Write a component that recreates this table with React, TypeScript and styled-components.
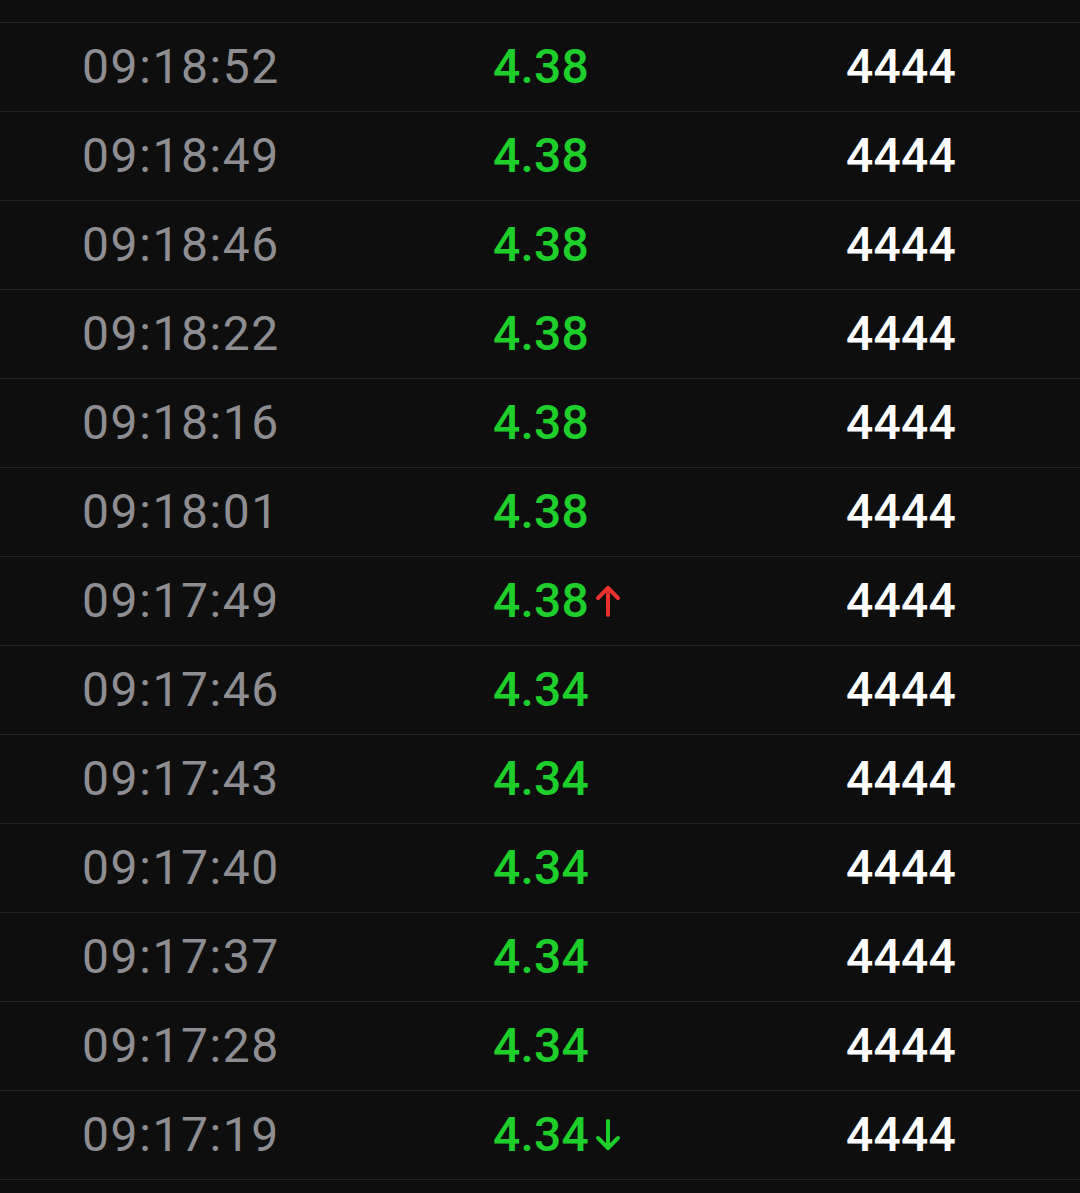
import React from 'react';
import styled, { createGlobalStyle } from 'styled-components';

type Trend = 'up' | 'down' | null;

interface Tick {
  time: string;
  price: string;
  volume: string;
  trend: Trend;
}

const ticks: Tick[] = [
  { time: '09:18:52', price: '4.38', volume: '4444', trend: null },
  { time: '09:18:49', price: '4.38', volume: '4444', trend: null },
  { time: '09:18:46', price: '4.38', volume: '4444', trend: null },
  { time: '09:18:22', price: '4.38', volume: '4444', trend: null },
  { time: '09:18:16', price: '4.38', volume: '4444', trend: null },
  { time: '09:18:01', price: '4.38', volume: '4444', trend: null },
  { time: '09:17:49', price: '4.38', volume: '4444', trend: 'up' },
  { time: '09:17:46', price: '4.34', volume: '4444', trend: null },
  { time: '09:17:43', price: '4.34', volume: '4444', trend: null },
  { time: '09:17:40', price: '4.34', volume: '4444', trend: null },
  { time: '09:17:37', price: '4.34', volume: '4444', trend: null },
  { time: '09:17:28', price: '4.34', volume: '4444', trend: null },
  { time: '09:17:19', price: '4.34', volume: '4444', trend: 'down' },
];

const GlobalStyle = createGlobalStyle`
  html, body {
    margin: 0;
    padding: 0;
    background: #0e0e0e;
  }
  body {
    font-family: Roboto, "Noto Sans", sans-serif;
  }
`;

const Page = styled.div`
  width: 1080px;
  height: 1193px;
  overflow: hidden;
  background: #0e0e0e;
`;

const TopGap = styled.div`
  height: 22px;
  border-bottom: 1px solid #242424;
`;

const Row = styled.div`
  display: grid;
  grid-template-columns: 411px 353px 1fr;
  align-items: center;
  height: 88px;
  padding-left: 82px;
  border-bottom: 1px solid #242424;
`;

const Cell = styled.span<{ $tone: 'time' | 'price' | 'volume' }>`
  display: flex;
  align-items: center;
  font-size: 48px;
  line-height: 1;
  letter-spacing: ${({ $tone }) => ($tone === 'time' ? '1.6px' : '0.2px')};
  color: ${({ $tone }) =>
    $tone === 'time' ? '#8d8d92' : $tone === 'price' ? '#1ecf2b' : '#ffffff'};
  font-weight: ${({ $tone }) => ($tone === 'time' ? 400 : 500)};
`;

const Arrow = ({ dir }: { dir: 'up' | 'down' }) => (
  <svg
    width="28"
    height="34"
    viewBox="0 0 28 34"
    style={{ marginLeft: 5 }}
    fill="none"
    stroke={dir === 'up' ? '#e8302c' : '#1ecf2b'}
    strokeWidth="4"
    strokeLinecap="round"
    strokeLinejoin="round"
  >
    {dir === 'up' ? (
      <>
        <path d="M14 31V4" />
        <path d="M4 14L14 4L24 14" />
      </>
    ) : (
      <>
        <path d="M14 3V30" />
        <path d="M4 20L14 30L24 20" />
      </>
    )}
  </svg>
);

export default function App() {
  return (
    <Page>
      <GlobalStyle />
      <TopGap />
      {ticks.map((t) => (
        <Row key={t.time}>
          <Cell $tone="time">{t.time}</Cell>
          <Cell $tone="price">
            {t.price}
            {t.trend && <Arrow dir={t.trend} />}
          </Cell>
          <Cell $tone="volume">{t.volume}</Cell>
        </Row>
      ))}
    </Page>
  );
}
